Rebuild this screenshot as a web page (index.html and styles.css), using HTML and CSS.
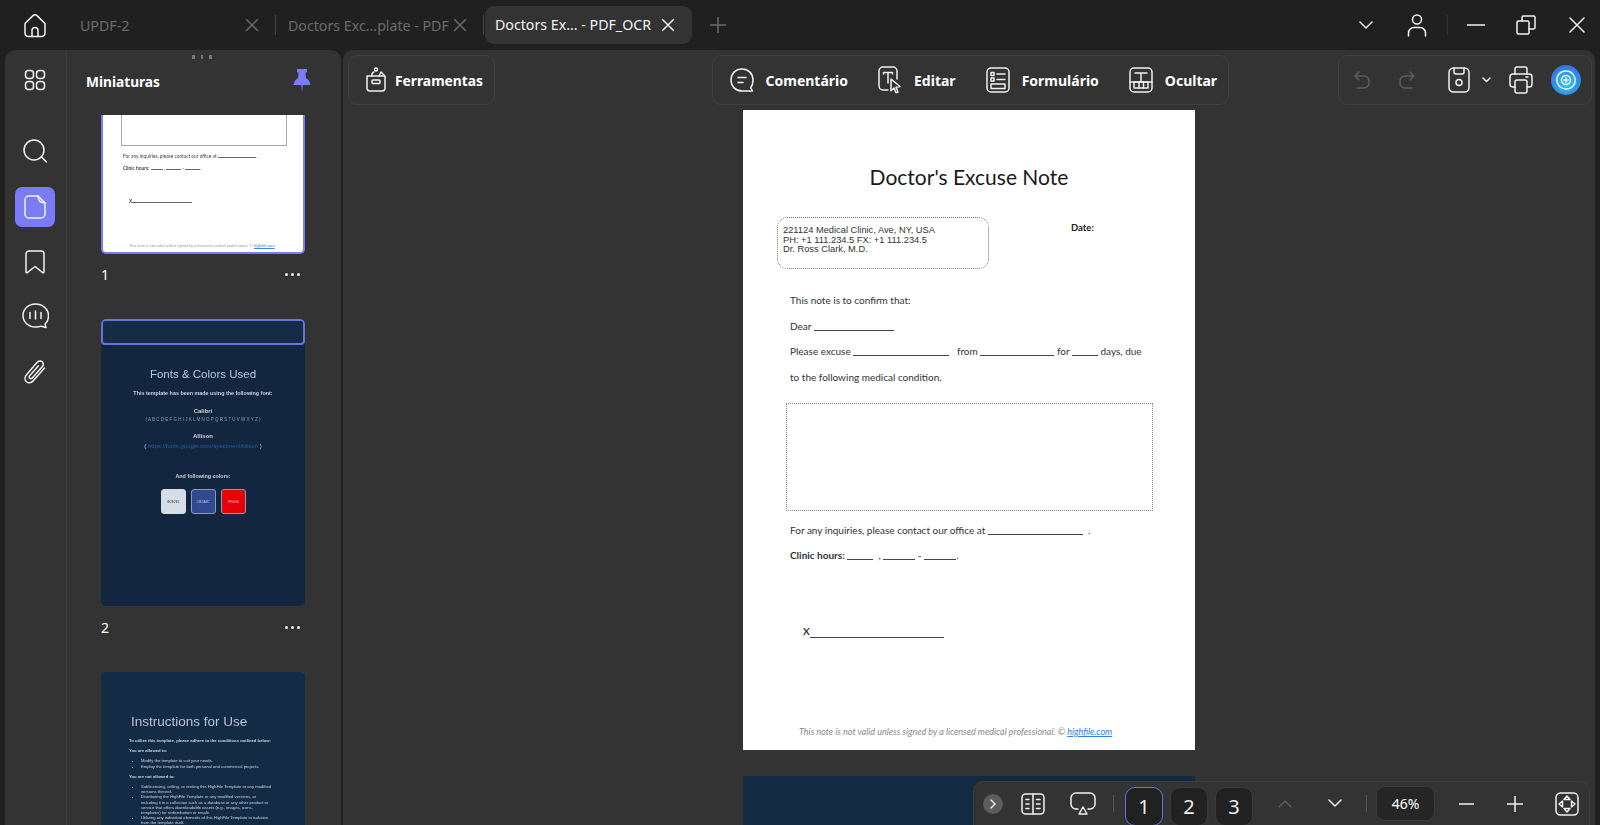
FILE: index.html
```html
<!DOCTYPE html>
<html lang="pt">
<head>
<meta charset="utf-8">
<title>UPDF</title>
<link rel="stylesheet" href="styles.css">
</head>
<body>
<header class="titlebar">
  <div class="home"><svg width="26" height="26" viewBox="0 0 26 26" class="ic"><path d="M3 11.5 11 3.6a3 3 0 0 1 4 0l8 7.9v9.5a3.5 3.5 0 0 1-3.5 3.5h-13A3.5 3.5 0 0 1 3 21z"/><path d="M10 24.5v-6a3 3 0 0 1 6 0v6"/></svg></div>
  <div class="tab tab-a"><span class="tab-name">UPDF-2</span><svg width="14" height="14" viewBox="0 0 14 14" class="ic dim"><path d="m1.5 1.5 11 11m0-11-11 11"/></svg></div>
  <i class="tab-sep"></i>
  <div class="tab tab-b"><span class="tab-name">Doctors Exc...plate - PDF</span><svg width="14" height="14" viewBox="0 0 14 14" class="ic dim"><path d="m1.5 1.5 11 11m0-11-11 11"/></svg></div>
  <i class="tab-sep"></i>
  <div class="tab tab-on"><span class="tab-name">Doctors Ex... - PDF_OCR</span><svg width="14" height="14" viewBox="0 0 14 14" class="ic"><path d="m1.5 1.5 11 11m0-11-11 11"/></svg></div>
  <div class="tab-add"><svg width="16" height="16" viewBox="0 0 16 16" class="ic dim"><path d="M8 0v16M0 8h16"/></svg></div>
  <div class="win">
    <svg class="ic win-chev" width="14" height="9" viewBox="0 0 14 9"><path d="m1 1 6 6 6-6"/></svg>
    <svg class="ic win-user" width="20" height="24" viewBox="0 0 20 24"><circle cx="10" cy="6.500" r="4.500"/><path d="M1.500 23v-3a5.500 5.500 0 0 1 5.500-5.500h6a5.500 5.500 0 0 1 5.500 5.500v3"/></svg>
    <i class="win-sep"></i>
    <svg class="ic win-min" width="18" height="2" viewBox="0 0 18 2"><path d="M0 1h18"/></svg>
    <svg class="ic win-max" width="20" height="20" viewBox="0 0 20 20"><rect x="1" y="6" width="12" height="13" rx="1.500"/><path d="M6 6V2.500A1.500 1.500 0 0 1 7.500 1h10A1.500 1.500 0 0 1 19 2.500v10a1.500 1.500 0 0 1-1.500 1.500H13"/></svg>
    <svg class="ic win-close" width="16" height="16" viewBox="0 0 16 16"><path d="m1 1 14 14M15 1 1 15"/></svg>
  </div>
</header>

<div class="workspace">
  <aside class="side">
    <nav class="rail">
      <svg class="ic r-apps" width="22" height="22" viewBox="0 0 22 22"><rect x="1.500" y="1.500" width="8" height="8" rx="3"/><rect x="12.500" y="1.500" width="8" height="8" rx="3"/><rect x="1.500" y="12.500" width="8" height="8" rx="3"/><rect x="12.500" y="12.500" width="8" height="8" rx="3"/></svg>
      <svg class="ic r-search" width="24" height="24" viewBox="0 0 24 24"><circle cx="11" cy="11" r="10"/><path d="m18.500 18 5 5"/></svg>
      <div class="r-doc"><svg class="ic" width="22" height="24" viewBox="0 0 22 24"><path d="M14 1H5a4 4 0 0 0-4 4v14a4 4 0 0 0 4 4h12a4 4 0 0 0 4-4V8z"/><path d="M14 1c0 4 2 7 7 7"/></svg></div>
      <svg class="ic r-mark" width="20" height="24" viewBox="0 0 20 24"><path d="M4 1h12a3 3 0 0 1 3 3v18a.8.8 0 0 1-1.300.6L10 16.500l-7.700 6.100A.8.8 0 0 1 1 22V4a3 3 0 0 1 3-3z"/></svg>
      <svg class="ic r-chat" width="27" height="26" viewBox="0 0 27 26"><path d="M13.500 1C6.500 1 1 6 1 12.500S6.500 24 13.500 24c2.500 0 4 0 5.500-.8l5 1.300-1-3.500c2.500-2 3.500-5 3.500-8.500C26.500 6 20.500 1 13.500 1z"/><path d="M8 9.500v6M13.500 8v8M19 9.500v6"/></svg>
      <svg class="ic r-clip" width="24" height="26" viewBox="0 0 24 26"><path d="m21.500 9-11 12.500c-2 2.500-5 3-7 1.200s-2-4.700 0-7L14 3.500c1.500-1.800 3.700-2 5.200-.7s1.500 3.400 0 5l-9.700 11c-.9 1-2 1.200-2.800.5s-.7-1.800.2-2.800l8.600-9.700"/></svg>
    </nav>
    <section class="thumbs">
      <div class="grip"><i></i><i></i><i></i></div>
      <div class="thumbs-head">
        <span class="thumbs-title">Miniaturas</span>
        <svg class="pin" width="18" height="26" viewBox="0 0 18 26"><path d="M4 1h10v3l-1.500 1 .5 5c2.500 1.500 4 3.500 4.500 7H.5c.5-3.500 2-5.500 4.500-7l.5-5L4 4z"/><path d="M8.300 17h1.400l-.7 8z"/></svg>
      </div>
      <div class="thumb-list">
        <div class="thumb t1">
          <div class="t1-box"></div>
          <p class="t1-l t1-a">For any inquiries, please contact our office at <i class="tb tb43"></i> .</p>
          <p class="t1-l t1-b"><b>Clinic hours:</b> <i class="tb tb12"></i> , <i class="tb tb15"></i> - <i class="tb tb15"></i>.</p>
          <p class="t1-l t1-x"><b>X</b><i class="tb tb60"></i></p>
          <p class="t1-l t1-f">This note is not valid unless signed by a licensed medical professional. © <u>highfile.com</u></p>
        </div>
        <div class="thumb-foot"><span>1</span><span class="dots"><i></i><i></i><i></i></span></div>

        <div class="thumb t2">
          <div class="t2-band"></div>
          <h3 class="t2-h">Fonts &amp; Colors Used</h3>
          <p class="t2-p t2-lead">This template has been made using the following font:</p>
          <p class="t2-p t2-fn">Calibri</p>
          <p class="t2-p t2-ab">( A B C D E F G H I J K L M N O P Q R S T U V W X Y Z )</p>
          <p class="t2-p t2-fn2">Allison</p>
          <p class="t2-p t2-link">( <span>https://fonts.google.com/specimen/Allison</span> )</p>
          <p class="t2-p t2-and">And following colors:</p>
          <div class="swatches">
            <span class="sw sw-a">#E2E2E2</span><span class="sw sw-b">#3D5A9C</span><span class="sw sw-c">#FF0000</span>
          </div>
        </div>
        <div class="thumb-foot foot2"><span>2</span><span class="dots"><i></i><i></i><i></i></span></div>

        <div class="thumb t3">
          <h3 class="t3-h">Instructions for Use</h3>
          <p class="t3-p t3-b1">To utilize this template, please adhere to the conditions outlined below:</p>
          <p class="t3-p t3-b">You are allowed to:</p>
          <ul class="t3-u">
            <li>Modify the template to suit your needs.</li>
            <li>Employ the template for both personal and commercial projects.</li>
          </ul>
          <p class="t3-p t3-b">You are not allowed to:</p>
          <ul class="t3-u">
            <li>Sublicensing, selling, or renting this HighFile Template or any modified versions thereof.</li>
            <li>Distributing the HighFile Template or any modified versions, or including it in a collection such as a database or any other product or service that offers downloadable assets (e.g., images, icons, templates) for redistribution or resale.</li>
            <li>Utilizing any individual elements of this HighFile Template in isolation from the template itself.</li>
          </ul>
        </div>
      </div>
    </section>
  </aside>

  <main class="view">
    <div class="tools">
      <div class="tool-box box-l">
        <span class="tool"><svg class="ic" width="26" height="26" viewBox="0 0 26 26"><path d="M4 9h18v12a3 3 0 0 1-3 3H7a3 3 0 0 1-3-3z"/><path d="M9 9a3 3 0 0 1 2-4M16 9l2-4 3 3"/><circle cx="13" cy="2.500" r="1.500"/><rect x="9" y="13" width="8" height="3.500" rx="1"/></svg><b>Ferramentas</b></span>
      </div>
      <div class="tool-box box-c">
        <span class="tool"><svg class="ic" width="24" height="24" viewBox="0 0 24 24"><path d="M12 1C5.500 1 1 5.700 1 12s4.500 11 11 11h10.500l-1.800-3.200C22.200 18 23 15 23 12 23 5.700 18.500 1 12 1z"/><path d="M8 9.500h8M8 14.500h5"/></svg><b>Comentário</b></span>
        <span class="tool"><svg class="ic" width="24" height="28" viewBox="0 0 24 28"><path d="M10 24H5a4 4 0 0 1-4-4V5a4 4 0 0 1 4-4h10a4 4 0 0 1 4 4v8"/><path d="M5.500 8V6.500h9V8M10 6.500V17"/><path class="ic-fill" d="m13 13 9 7.500-4 .8 2 4.700-2 .8-2-4.800-3 2.700z"/></svg><b>Editar</b></span>
        <span class="tool"><svg class="ic" width="24" height="26" viewBox="0 0 24 26"><rect x="1" y="1" width="22" height="24" rx="4"/><rect x="5" y="5.500" width="3" height="3"/><rect x="5" y="11" width="3" height="3"/><path d="M11 7h8M11 12.500h8"/><rect x="5" y="17" width="14" height="4.500"/></svg><b>Formulário</b></span>
        <span class="tool"><svg class="ic" width="24" height="26" viewBox="0 0 24 26"><rect x="1" y="1" width="22" height="24" rx="4"/><path d="M6 6h12M12 6v9M1 15h22"/><rect x="5" y="15" width="14" height="6"/><path d="M10 15v6M14.500 15v6"/></svg><b>Ocultar</b></span>
      </div>
      <div class="tool-box box-r">
        <svg class="ic faint r-undo" width="16" height="18" viewBox="0 0 16 18"><path d="M5 1 1 5l4 4M1 5h9a5 5 0 0 1 5 5v2a5 5 0 0 1-5 5H3"/></svg>
        <svg class="ic faint r-redo" width="16" height="18" viewBox="0 0 16 18"><path d="m11 1 4 4-4 4M15 5H6a5 5 0 0 0-5 5v2a5 5 0 0 0 5 5h7"/></svg>
        <svg class="ic r-save" width="22" height="26" viewBox="0 0 22 26"><rect x="1" y="1" width="20" height="24" rx="4.500"/><path d="M6 1v4a2 2 0 0 0 2 2h6a2 2 0 0 0 2-2V1"/><circle cx="11" cy="15.500" r="3"/></svg>
        <svg class="ic r-caret" width="9" height="6" viewBox="0 0 9 6"><path d="m1 1 3.500 3.500L8 1"/></svg>
        <svg class="ic r-print" width="24" height="28" viewBox="0 0 24 28"><path d="M6 8V3a2 2 0 0 1 2-2h8a2 2 0 0 1 2 2v5"/><path d="M6 21H4a3 3 0 0 1-3-3v-7a3 3 0 0 1 3-3h16a3 3 0 0 1 3 3v7a3 3 0 0 1-3 3h-2"/><rect x="6" y="14" width="12" height="13" rx="2"/><path d="M17 11h2"/></svg>
        <span class="ai"><svg class="ic" width="22" height="22" viewBox="0 0 22 22"><path d="M11 2a9 9 0 0 1 8 5 9 9 0 0 1-1 10 9 9 0 0 1-7 3 9 9 0 0 1-8-5 9 9 0 0 1 1-10 9 9 0 0 1 7-3z"/><circle cx="11" cy="11" r="4.500"/><path d="M11 9v4M9 11h4"/></svg></span>
      </div>
    </div>

    <div class="doc">
      <article class="page">
        <h1 class="p-title">Doctor's Excuse Note</h1>
        <div class="p-head">
          <div class="p-addr">221124 Medical Clinic, Ave, NY, USA<br>PH: +1 111.234.5 FX: +1 111.234.5<br>Dr. Ross Clark, M.D.</div>
          <b class="p-date">Date:</b>
        </div>
        <p class="p-line p-first">This note is to confirm that:</p>
        <p class="p-line">Dear <i class="blank b80"></i></p>
        <p class="p-line">Please excuse <i class="blank b96"></i> &nbsp; from <i class="blank b74"></i> for <i class="blank b26"></i> days, due</p>
        <p class="p-line">to the following medical condition.</p>
        <div class="p-box"></div>
        <p class="p-line p-inq">For any inquiries, please contact our office at <i class="blank b95"></i> &nbsp;.</p>
        <p class="p-line"><b>Clinic hours:</b> <i class="blank b26"></i> &nbsp;, <i class="blank b32"></i> - <i class="blank b32"></i>.</p>
        <p class="p-line p-x"><b>X</b><i class="blank b134"></i></p>
        <p class="p-foot">This note is not valid unless signed by a licensed medical professional. © <u>highfile.com</u></p>
      </article>
      <article class="page page-dark"></article>
    </div>

    <div class="pager">
      <span class="more"><svg class="ic" width="7" height="10" viewBox="0 0 7 10"><path d="m1 1 4 4-4 4"/></svg></span>
      <svg class="ic pg-book" width="24" height="22" viewBox="0 0 24 22"><rect x="1" y="1" width="22" height="20" rx="3.500"/><path d="M12 1v20M5 6.500h3M5 11h3M5 15.500h3M15.500 6.500H19M15.500 11H19M15.500 15.500H19"/></svg>
      <svg class="ic pg-air" width="26" height="24" viewBox="0 0 26 24"><path d="M8 17H6a5 5 0 0 1-5-5V6a5 5 0 0 1 5-5h14a5 5 0 0 1 5 5v6a5 5 0 0 1-5 5h-2"/><path d="m13 15 4 7H9z"/></svg>
      <i class="pg-sep"></i>
      <span class="pg-num pg-on">1</span>
      <span class="pg-num">2</span>
      <span class="pg-num">3</span>
      <svg class="ic faint pg-up" width="14" height="9" viewBox="0 0 14 9"><path d="m1 8 6-6 6 6"/></svg>
      <svg class="ic pg-down" width="14" height="9" viewBox="0 0 14 9"><path d="m1 1 6 6 6-6"/></svg>
      <i class="pg-sep pg-sep2"></i>
      <span class="pg-zoom">46%</span>
      <svg class="ic pg-minus" width="15" height="2" viewBox="0 0 15 2"><path d="M0 1h15"/></svg>
      <svg class="ic pg-plus" width="16" height="16" viewBox="0 0 16 16"><path d="M8 0v16M0 8h16"/></svg>
      <svg class="ic pg-fit" width="24" height="24" viewBox="0 0 24 24"><rect x="1" y="1" width="22" height="22" rx="4.500"/><path class="ic-fill" d="m12 4 3 3.500H9zM12 20l3-3.500H9zM4 12l3.500-3v6zM20 12l-3.500-3v6z"/></svg>
    </div>
  </main>
</div>
</body>
</html>
```
FILE: styles.css
```css
* { box-sizing: border-box; }
html, body { margin: 0; height: 100%; }
body {
  width: 1600px; height: 825px; overflow: hidden;
  background: #202020; color: #fff;
  font-family: "Noto Sans", "Open Sans", sans-serif;
  display: flex; flex-direction: column;
}
p, h1, h3, ul { margin: 0; padding: 0; font-weight: normal; }
i { font-style: normal; }
.ic { fill: none; stroke: #f2f2f2; stroke-width: 1.5; stroke-linecap: round; stroke-linejoin: round; flex: none; display: block; }
.ic.dim { stroke: #6a6a6a; }
.ic.faint { stroke: #5c5c5c; }
.ic-fill { fill: #333; }

/* title bar */
.titlebar { height: 50px; flex: none; display: flex; align-items: center; }
.home { width: 80px; flex: none; padding-left: 22px; }
.tab { display: flex; flex: none; align-items: center; font-size: 14.200px; color: #6b6b6b; height: 38px; white-space: nowrap; }
.tab-a { width: 195px; justify-content: space-between; padding-right: 16px; }
.tab-b { width: 207px; padding-left: 12px; justify-content: space-between; padding-right: 16px; }
.tab-on { width: 207px; margin-left: 1px; margin-top: -1px; padding: 0 17px 0 10px; justify-content: space-between; background: #333; border-radius: 9px; color: #f2f2f2; }
.tab-sep { width: 1px; height: 20px; background: #444; flex: none; }
.tab-add { margin-left: 18px; }
.win { flex: 1; display: flex; align-items: center; justify-content: flex-end; padding-right: 15px; }
.win-chev { margin-right: 34px; }
.win-user { margin-right: 20px; }
.win-sep { width: 1px; height: 20px; background: #333; margin-right: 19px; }
.win-min { margin-right: 31px; }
.win-max { margin-right: 33px; }

/* layout */
.workspace { flex: 1; min-height: 0; display: flex; gap: 2px; padding: 0 5px; }
.side { width: 336px; flex: none; display: flex; background: #333; border-radius: 10px 10px 0 0; overflow: hidden; }
.rail { width: 62px; flex: none; border-right: 1px solid #3d3d3d; display: flex; flex-direction: column; align-items: center; padding-right: 1px; padding-top: 19px; }
.r-search { margin-top: 48px; }
.r-doc { width: 40px; height: 40px; margin-top: 24px; background: #7b7bf6; border-radius: 7px; display: flex; align-items: center; justify-content: center; }
.r-mark { margin-top: 23px; }
.r-chat { margin-top: 29px; }
.r-clip { margin-top: 30px; }

/* thumbnails */
.thumbs { flex: 1; min-width: 0; position: relative; display: flex; flex-direction: column; }
.grip { display: flex; justify-content: center; gap: 6px; height: 14px; padding-top: 5px; padding-right: 4px; }
.grip i { width: 2.500px; height: 4px; background: #777; }
.thumbs-head { height: 51px; flex: none; display: flex; align-items: center; justify-content: space-between; padding: 0 30px 16px 19px; }
.thumbs-title { font-size: 13.700px; font-weight: 700; }
.pin { fill: #7b7bf6; display: block; margin-top: -1px; }
.thumb-list { flex: 1; min-height: 0; overflow: hidden; padding-left: 34px; }
.thumb { width: 204px; position: relative; overflow: hidden; filter: blur(.3px); }
.t1 { height: 139px; background: #fff; border: 2.500px solid #7b7bf6; border-top: 0; border-radius: 0 0 5px 5px; color: #444; padding-left: 18px; }
.t1-box { width: 166px; height: 31px; border: 1px solid #aaa; border-top: 0; }
.t1-l { font-family: "Lato", sans-serif; font-size: 4.800px; line-height: 6px; white-space: nowrap; }
.t1-a { margin: 7px 0 0 2px; }
.t1-b { margin: 6px 0 0 2px; }
.t1-x { margin: 27px 0 0 8px; }
.t1-f { margin: 39px 0 0 8px; font-style: italic; color: #999; font-size: 4.200px; }
.t1-f u { color: #3b82f6; }
.tb { display: inline-block; border-bottom: .6px solid #666; height: 4px; vertical-align: baseline; }
.tb12 { width: 12px; } .tb15 { width: 15px; } .tb43 { width: 38px; } .tb60 { width: 60px; }
.thumb-foot { width: 204px; height: 65px; padding: 14px 5px 0 0; display: flex; justify-content: space-between; font-size: 14px; line-height: 14px; }
.dots { display: flex; gap: 3px; padding-top: 5px; }
.dots i { width: 3px; height: 3px; border-radius: 50%; background: #eee; }
.t2 { height: 287px; background: #132640; border-radius: 5px; text-align: center; color: #c7d0dc; }
.t2-band { height: 26px; background: #152c46; border: 2.500px solid #6f6fe0; border-radius: 4px; }
.t2-h { font-family: "Liberation Sans", sans-serif; font-size: 11.500px; line-height: 14px; margin-top: 22px; color: #b7c4d4; }
.t2-p { font-family: "Liberation Sans", sans-serif; font-size: 5.400px; line-height: 7px; white-space: nowrap; }
.t2-lead { margin-top: 9px; font-weight: 700; }
.t2-fn { margin-top: 11px; font-weight: 700; font-size: 6px; }
.t2-ab { margin-top: 1px; font-size: 4.500px; color: #8d9bb0; }
.t2-fn2 { margin-top: 10px; font-weight: 700; font-size: 6px; }
.t2-link { margin-top: 3px; font-size: 6px; }
.t2-link span { color: #1c5fa8; }
.t2-and { margin-top: 23px; font-weight: 700; }
.swatches { display: flex; justify-content: center; gap: 5px; margin-top: 9px; }
.sw { width: 25px; height: 25px; border-radius: 3px; font-family: "Liberation Sans", sans-serif; font-size: 3px; display: flex; align-items: center; justify-content: center; border: 1px solid #8d9bb0; }
.sw-a { background: #d5dde8; color: #333; border-color: #d5dde8; }
.sw-b { background: #2f4a90; color: #ccd; }
.sw-c { background: #e6000a; color: #fbb; }
.foot2 { padding-top: 15px; height: 66px; }
.t3 { height: 300px; background: #142b45; border-radius: 5px 5px 0 0; color: #ccd5e0; padding: 42px 32px 0 28px; }
.t3-h { font-family: "Liberation Sans", sans-serif; font-size: 13.500px; line-height: 16px; color: #b7c4d4; margin-bottom: 8px; padding-left: 2px; }
.t3-p, .t3-u { font-family: "Liberation Sans", sans-serif; font-size: 4.200px; line-height: 5.200px; }
.t3-p { margin-bottom: 5px; font-weight: 700; }
.t3-u { padding-left: 12px; margin-bottom: 5px; }

/* viewer */
.view { flex: 1; min-width: 0; position: relative; background: #333; border-radius: 10px 10px 0 0; overflow: hidden; display: flex; flex-direction: column; }
.tools { display: grid; grid-template-columns: 1fr auto 1fr; padding: 5px 3px 0 5px; height: 60px; flex: none; }
.tool-box { height: 50px; border: 1px solid #3f3f3f; border-radius: 9px; display: flex; align-items: center; background: #333; }
.box-l { justify-self: start; width: 147px; padding-left: 14px; }
.box-c { width: 517px; padding-left: 17px; gap: 30px; }
.box-r { justify-self: end; width: 254px; padding-left: 15px; }
.tool { display: flex; align-items: center; gap: 12px; font-size: 14px; }
.tool b { font-weight: 700; }
.box-l .tool { gap: 6px; font-size: 13.800px; }
.r-undo { margin-right: 29px; }
.r-redo { margin-right: 33px; }
.r-save { margin-right: 12px; }
.r-caret { margin-right: 18px; }
.r-print { margin-right: 18px; }
.ai { width: 30px; height: 30px; border-radius: 50%; background: radial-gradient(circle at 50% 60%, #2fd4e8, #2f7fe8 65%, #2a5fd0); display: flex; align-items: center; justify-content: center; }

.doc { flex: 1; min-height: 0; overflow: hidden; display: flex; flex-direction: column; align-items: center; }
.page { width: 452px; height: 640px; flex: none; background: #fff; color: #222; padding-top: 52px; font-family: "Lato", "Open Sans", sans-serif; }
.p-title { height: 30px; font-size: 21px; line-height: 30px; text-align: center; color: #1a1a1a; }
.p-head { display: flex; align-items: flex-start; margin: 25px 0 0 34px; }
.p-addr { width: 212px; height: 52px; border: 1px dotted #777; border-radius: 10px; padding: 8px 0 0 5px; font-family: "Liberation Sans", sans-serif; font-size: 9.300px; line-height: 9.500px; color: #333; white-space: nowrap; }
.p-date { margin: 4px 0 0 82px; font-size: 9.500px; line-height: 14px; }
.p-line { margin-left: 47px; height: 25.700px; line-height: 25.700px; font-size: 10px; white-space: nowrap; color: #333; }
.p-first { margin-top: 19px; }
.p-box { width: 367px; height: 108px; margin: 12px 0 0 43px; border: 1px dotted #888; }
.p-inq { margin-top: 7px; }
.p-x { margin: 50px 0 0 60px; }
.p-x .blank { vertical-align: -3px; }
.p-foot { margin: 80px 0 0 56px; font-size: 9px; line-height: 13px; font-style: italic; color: #8a8a8a; white-space: nowrap; }
.p-foot u { color: #2f80ed; }
.blank { display: inline-block; height: 8px; border-bottom: 1px solid #444; vertical-align: -1px; }
.b26 { width: 26px; } .b32 { width: 32px; } .b74 { width: 74px; } .b80 { width: 80px; } .b95 { width: 95px; } .b96 { width: 96px; } .b134 { width: 134px; }
.page-dark { background: #132a43; margin-top: 26px; height: 200px; padding: 0; }

/* page bar */
.pager { position: absolute; right: 5px; bottom: 0; width: 617px; height: 44px; background: #333; border: 1px solid #3d3d3d; border-bottom: 0; border-radius: 10px 10px 0 0; display: flex; align-items: center; padding-left: 9px; }
.more { width: 20px; height: 20px; border-radius: 50%; background: #5c5c5c; display: flex; align-items: center; justify-content: center; margin-right: 18px; }
.pg-book { margin-right: 25px; }
.pg-air { margin-right: 17px; }
.pg-sep { width: 1px; height: 17px; background: #555; margin-right: 11px; }
.pg-num { width: 38px; height: 39px; margin: 5px 7px 0 0; align-self: flex-start; background: #212121; border: 1px solid #3a3a3a; border-radius: 10px; font-size: 20px; line-height: 37px; text-align: center; color: #eee; }
.pg-on { border: 1.500px solid #6f6fe0; }
.pg-up { margin: 0 36px 0 18px; }
.pg-sep2 { margin: 0 9px 0 24px; }
.pg-zoom { width: 59px; height: 35px; background: #252525; border: 1px solid #3a3a3a; border-radius: 9px; font-size: 14px; line-height: 33px; text-align: center; margin-right: 24px; }
.pg-minus { margin-right: 33px; }
.pg-plus { margin-right: 32px; }
```
